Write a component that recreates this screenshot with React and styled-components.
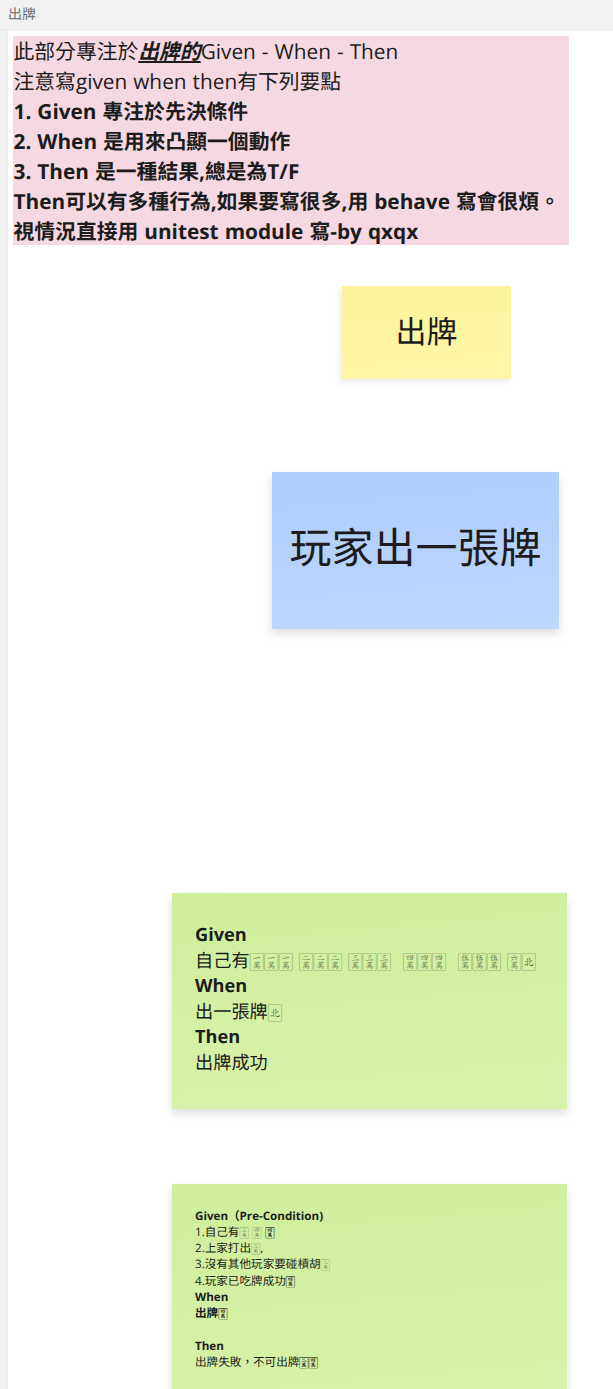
import React from 'react'
import styled, { createGlobalStyle } from 'styled-components'

const Global = createGlobalStyle`
  html, body {
    margin: 0;
    padding: 0;
    background: #fff;
    overflow: hidden;
  }
  body {
    font-family: "Open Sans", "Noto Sans CJK TC", "DejaVu Sans", sans-serif;
    color: #1c1c1c;
    text-rendering: geometricPrecision;
  }
`

const Page = styled.div`
  width: 613px;
  height: 1389px;
  overflow: hidden;
  display: flex;
  flex-direction: column;
`
const TitleBar = styled.div`
  height: 29px;
  flex: none;
  background: #f1f1f1;
  border-bottom: 1px solid #e8e8e8;
  padding-left: 8px;
  font-size: 14px;
  line-height: 30px;
  color: #707070;
`
const Body = styled.div`
  flex: 1;
  display: flex;
`
const Gutter = styled.div`
  width: 8px;
  flex: none;
  background: #f1f1f1;
  border-right: 1px solid #ececec;
  box-sizing: border-box;
`
const Board = styled.div`
  position: relative;
  flex: 1;
  background: #fff;
`
const Note = styled.div`
  position: absolute;
  left: ${(p) => p.$x}px;
  top: ${(p) => p.$y}px;
  width: ${(p) => p.$w}px;
  height: ${(p) => p.$h}px;
  box-sizing: border-box;
  background: linear-gradient(175deg, ${(p) => p.$from}, ${(p) => p.$to});
  box-shadow: ${(p) => p.$shadow || '0 5px 9px rgba(0, 0, 0, 0.13)'};
`
const Centered = styled(Note)`
  display: flex;
  align-items: center;
  justify-content: center;
  padding-bottom: ${(p) => p.$lift}px;
  font-size: ${(p) => p.$size}px;
`
const Pink = styled(Note)`
  background: #f6d8e2;
  box-shadow: none;
  padding: 0.5px 0 0 0.5px;
  font-size: 20.8px;
  word-spacing: 0.6px;
  line-height: 30px;
  font-weight: 400;
`
const Line = styled.div`
  white-space: pre;
`
const Strong = styled.div`
  font-weight: 700;
  white-space: pre;
`
const Em = styled.em`
  font-weight: 700;
  text-decoration: underline;
`
const Card = styled(Note)`
  padding: ${(p) => p.$pad}px 0 0 23px;
  font-size: ${(p) => p.$size}px;
  line-height: ${(p) => p.$lh}px;
`
const Tile = styled.span`
  font-family: "DejaVu Sans", sans-serif;
  font-weight: 400;
  line-height: 0;
  opacity: ${(p) => (p.$dark ? 1 : 0.68)};
  -webkit-text-stroke: ${(p) => (p.$dark ? '0.15px #1c1c1c' : '0')};
`

const yellow = { $from: '#fcf29c', $to: '#fff7a8', $shadow: '-3px 4px 6px rgba(0, 0, 0, 0.07)' }
const blue = { $from: '#adcdfb', $to: '#bed7ff' }
const green = { $from: '#cfef9b', $to: '#d9f2ab' }

export default function App() {
  return (
    <Page>
      <Global />
      <TitleBar>出牌</TitleBar>
      <Body>
        <Gutter />
        <Board>
          <Pink $x={5} $y={6} $w={556} $h={209}>
            <Line>此部分專注於<Em>出牌的</Em>Given - When - Then</Line>
            <Line>注意寫given when then有下列要點</Line>
            <Strong>1. Given 專注於先決條件</Strong>
            <Strong>2. When 是用來凸顯一個動作</Strong>
            <Strong>3. Then 是一種結果,總是為T/F</Strong>
            <Strong>Then可以有多種行為,如果要寫很多,用 behave 寫會很煩。</Strong>
            <Strong>視情況直接用 unitest module 寫-by qxqx</Strong>
          </Pink>
          <Centered $x={334} $y={256} $w={169} $h={93} $size={31} $lift={5} {...yellow}>出牌</Centered>
          <Centered $x={264} $y={442} $w={287} $h={157} $size={42} $lift={10} {...blue}>玩家出一張牌</Centered>
          <Card $x={164} $y={863} $w={395} $h={216} $pad={30} $size={18.2} $lh={25.5} {...green}>
            <Strong>Given</Strong>
            <Line>自己有<Tile>🀇🀇🀇 🀈🀈🀈 🀉🀉🀉  🀊🀊🀊  🀋🀋🀋 🀌🀃</Tile></Line>
            <Strong>When</Strong>
            <Line>出一張牌<Tile>🀃</Tile></Line>
            <Strong>Then</Strong>
            <Line>出牌成功</Line>
          </Card>
          <Card $x={164} $y={1154} $w={395} $h={230} $pad={24.5} $size={11.6} $lh={16.25} {...green}>
            <Strong>Given（Pre-Condition)</Strong>
            <Line>1.自己有<Tile>🀉 🀊 </Tile><Tile $dark>🀊</Tile></Line>
            <Line>2.上家打出<Tile>🀈</Tile>,</Line>
            <Line>3.沒有其他玩家要碰槓胡<Tile>🀈</Tile></Line>
            <Line>4.玩家已吃牌成功<Tile $dark>🀊</Tile></Line>
            <Strong>When</Strong>
            <Strong>出牌<Tile $dark>🀊</Tile></Strong>
            <Line> </Line>
            <Strong>Then</Strong>
            <Line>出牌失敗，不可出牌<Tile $dark>🀈🀊</Tile></Line>
          </Card>
        </Board>
      </Body>
    </Page>
  )
}
